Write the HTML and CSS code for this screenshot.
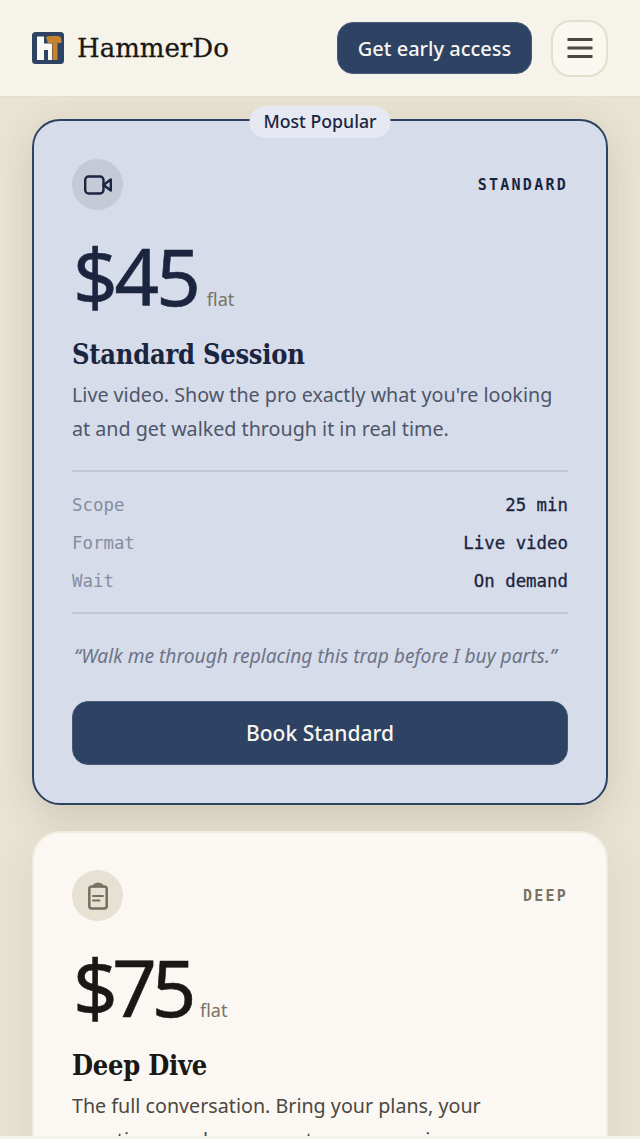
FILE: index.html
```html
<!DOCTYPE html>
<html>
	<head>
		<meta charset="utf-8">
		<title>HammerDo</title>
		<link rel="stylesheet" href="styles.css">
	</head>
	<body>
		<header class="topbar">
			<div class="brand">
				<svg class="logo" viewBox="0 0 32 32">
					<rect width="32" height="32" rx="3.5" fill="#2e4263"/>
					<path d="M5 4.500h7v7h8V28h-4V18h-4v10H5z" fill="#faf8f2"/>
					<path d="M14 5q2-1 5-1h7q3 0 3.500 3.500V11H25.500v17h-5V11H16z" fill="#c5832f"/>
				</svg>
				<span class="brandname">HammerDo</span>
			</div>
			<button class="cta">Get early access</button>
			<button class="menu">
				<svg viewBox="0 0 26 20" width="26" height="20">
					<path d="M0.500 1.500h25M0.500 10h25M0.500 18.500h25" stroke="#4d483e" stroke-width="3"/>
				</svg>
			</button>
		</header>

		<main class="plans">
			<section class="card popular">
				<span class="badge">Most Popular</span>
				<div class="cardtop">
					<span class="iconwrap">
						<svg viewBox="0 0 28 20" width="28" height="20" fill="none" stroke="#1b2540" stroke-width="2.400" stroke-linejoin="round">
							<rect x="1.200" y="1.500" width="18.300" height="17" rx="3.500"/>
							<path d="M19.500 10l7.300-5.500v11z"/>
						</svg>
					</span>
					<span class="tier">STANDARD</span>
				</div>
				<div class="price"><span class="amount">$45</span><span class="flat">flat</span></div>
				<h2>Standard Session</h2>
				<p class="desc">Live video. Show the pro exactly what you're looking at and get walked through it in real time.</p>
				<dl class="specs">
					<div class="spec"><dt>Scope</dt><dd>25 min</dd></div>
					<div class="spec"><dt>Format</dt><dd>Live video</dd></div>
					<div class="spec"><dt>Wait</dt><dd>On demand</dd></div>
				</dl>
				<p class="quote">“Walk me through replacing this trap before I buy parts.”</p>
				<button class="book">Book Standard</button>
			</section>

			<section class="card deep">
				<div class="cardtop">
					<span class="iconwrap">
						<svg viewBox="0 0 20 28" width="20" height="28" fill="none" stroke="#766f5e" stroke-width="2.500" stroke-linejoin="round" stroke-linecap="round">
							<rect x="1.300" y="4.500" width="17.400" height="22" rx="2.500"/>
							<path d="M6 4.500q0-2 2-2h.5q1.500-1.500 3 0h.5q2 0 2 2"/>
							<path d="M5 14h10M5 18.500h6.500" stroke-width="2"/>
						</svg>
					</span>
					<span class="tier">DEEP</span>
				</div>
				<div class="price"><span class="amount">$75</span><span class="flat">flat</span></div>
				<h2>Deep Dive</h2>
				<p class="desc">The full conversation. Bring your plans, your questions, and your worst case scenarios.</p>
			</section>
		</main>
		<div class="bottomstrip"></div>
	</body>
</html>
```

FILE: styles.css
```css
html, body {
	margin: 0;
	height: 100%;
	overflow: hidden;
}
body {
	background: #e9e3d3;
	font-family: "Noto Sans", Roboto, sans-serif;
	color: #1a1814;
}
.topbar {
	display: flex;
	align-items: center;
	height: 97px;
	padding: 0 32px;
	box-sizing: border-box;
	background: #f6f3ea;
	border-bottom: 1px solid #e4decd;
}
.brand {
	display: flex;
	align-items: center;
	gap: 13px;
	margin-right: auto;
}
.logo {
	width: 32px;
	height: 32px;
}
.brandname {
	font-family: "DejaVu Serif", serif;
	font-size: 26px;
	-webkit-text-stroke: 0.3px #1a1814;
}
.cta {
	width: 195px;
	height: 52px;
	background: #2e4263;
	border: 1px solid #46597a;
	border-radius: 16px;
	color: #f8f6f0;
	font: 500 20px "Noto Sans", sans-serif;
}
.menu {
	display: flex;
	align-items: center;
	justify-content: center;
	width: 57px;
	height: 57px;
	margin-left: 19px;
	padding: 0;
	background: #faf7f1;
	border: 2px solid #e4decd;
	border-radius: 20px;
}
.plans {
	display: flex;
	flex-direction: column;
	gap: 26px;
	padding: 22px 32px 0;
}
.card {
	position: relative;
	padding: 38px;
	background: #fbf8f3;
	border: 2px solid #f0ebdf;
	border-radius: 28px;
	box-shadow: 0 10px 40px rgba(80, 70, 40, 0.08);
}
.deep {
	padding-top: 37px;
}
.popular {
	background: #d6dce9;
	border-color: #2e4263;
	box-shadow: 0 10px 36px rgba(60, 55, 40, 0.16);
}
.badge {
	position: absolute;
	top: -15px;
	left: 50%;
	transform: translateX(-50%);
	padding: 0 14px;
	height: 32px;
	line-height: 31px;
	background: #e6e9f2;
	border-radius: 16px;
	font-size: 17.700px;
	font-weight: 500;
	white-space: nowrap;
	color: #1b2540;
}
.cardtop {
	display: flex;
	align-items: center;
	justify-content: space-between;
}
.iconwrap {
	display: flex;
	align-items: center;
	justify-content: center;
	width: 51px;
	height: 51px;
	border-radius: 50%;
	background: #e6e1d3;
}
.popular .iconwrap {
	background: #c5cad6;
}
.tier {
	font-family: "DejaVu Sans Mono", monospace;
	font-size: 15px;
	font-weight: 700;
	letter-spacing: 2.250px;
	color: #7a7364;
}
.popular .tier {
	color: #1b2540;
}
.price {
	display: flex;
	align-items: baseline;
	gap: 9px;
	margin-top: 20px;
	height: 92px;
}
.amount {
	font-size: 78px;
	line-height: 92px;
	letter-spacing: -3px;
	margin-left: 1px;
	-webkit-text-stroke: 0.6px currentColor;
	color: #1a1814;
}
.deep .amount {
	letter-spacing: -5.300px;
}
.popular .amount {
	color: #1b2540;
}
.flat {
	font-size: 18px;
	color: #7a7364;
}
h2 {
	margin: 16px 0 0;
	font-family: "DejaVu Serif Condensed", "DejaVu Serif", serif;
	font-stretch: condensed;
	font-size: 27px;
	line-height: 34px;
	font-weight: 700;
	letter-spacing: -0.250px;
}
.popular h2 {
	color: #1b2540;
}
.desc {
	margin: 6px 0 0;
	font-size: 19.700px;
	line-height: 33.500px;
	color: #4c483f;
}
.popular .desc {
	color: #4e566b;
}
.specs {
	margin: 25px 0 0;
	padding: 14px 0 12px;
	border-top: 2px solid #bfc6d6;
	border-bottom: 2px solid #bfc6d6;
}
.spec {
	display: flex;
	justify-content: space-between;
	align-items: center;
	height: 38px;
	font-family: "DejaVu Sans Mono", monospace;
	font-size: 17.400px;
}
dt {
	color: #868da0;
}
dd {
	margin: 0;
	color: #1b2540;
	-webkit-text-stroke: 0.3px #1b2540;
}
.quote {
	margin: 28px 0 0;
	padding-left: 2px;
	font-size: 19.200px;
	font-style: italic;
	color: #6d7488;
}
.book {
	display: block;
	width: 100%;
	height: 64px;
	margin-top: 32px;
	background: #2e4263;
	border: 1px solid #46597a;
	border-radius: 16px;
	color: #f8f6f0;
	font: 500 21px "Noto Sans", sans-serif;
}
.bottomstrip {
	position: fixed;
	left: 0;
	right: 0;
	bottom: 0;
	height: 3px;
	background: #f6f3ea;
}
```
